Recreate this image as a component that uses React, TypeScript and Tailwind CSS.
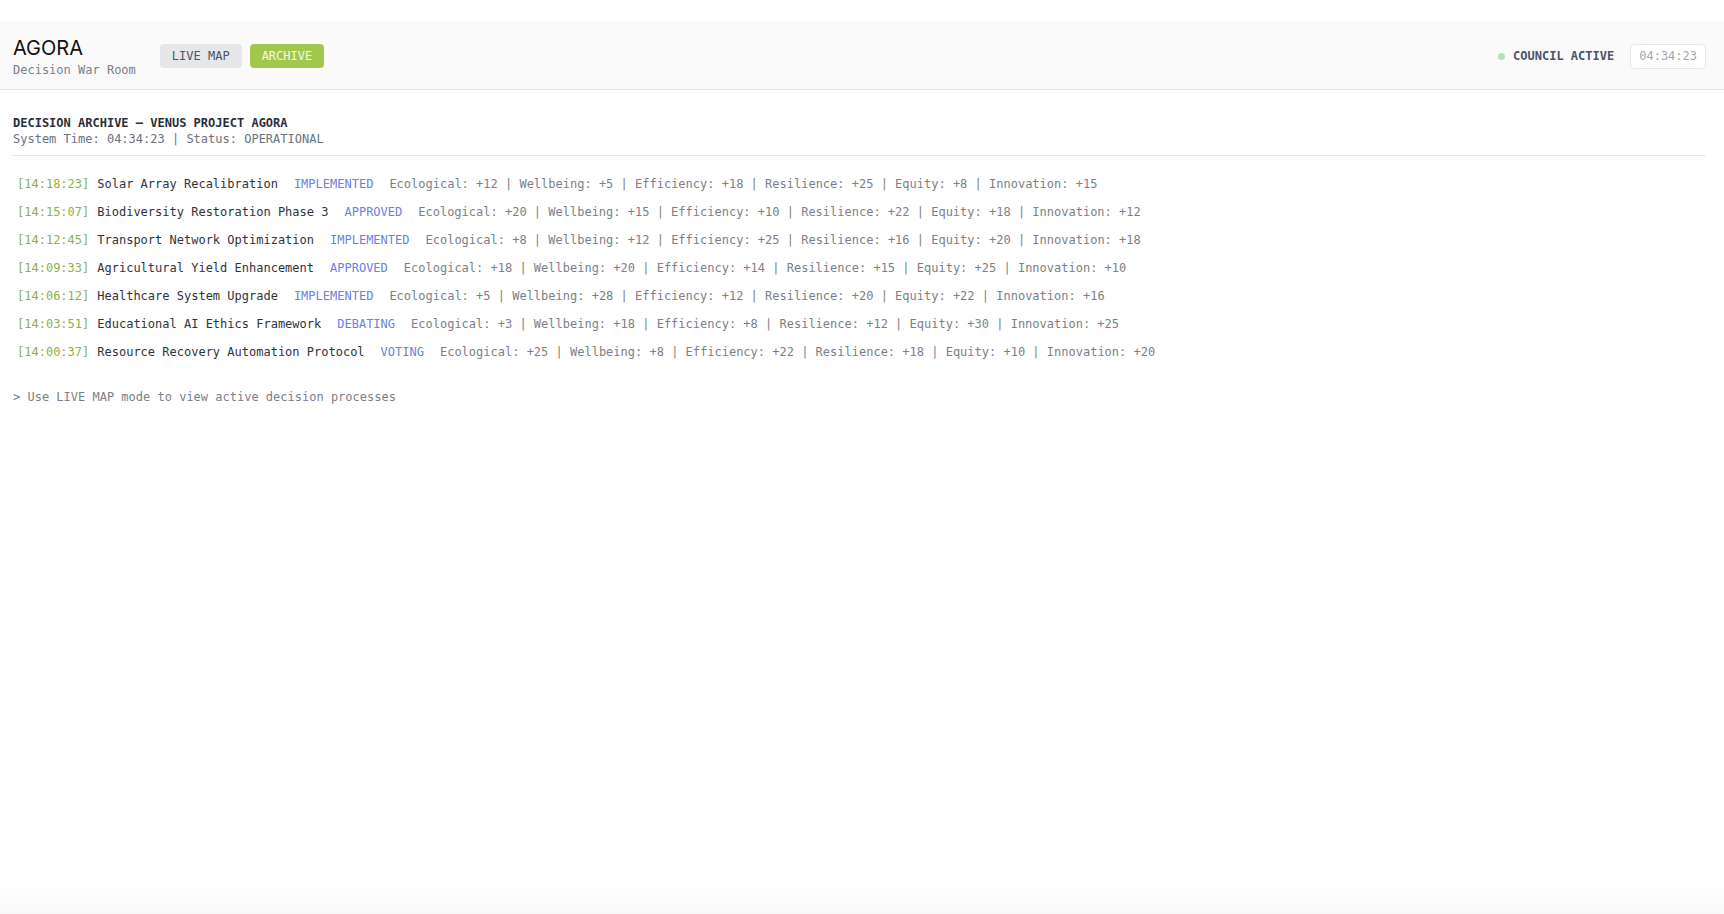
const decisions = [
  {
    time: "14:18:23",
    title: "Solar Array Recalibration",
    status: "IMPLEMENTED",
    metrics: "Ecological: +12 | Wellbeing: +5 | Efficiency: +18 | Resilience: +25 | Equity: +8 | Innovation: +15",
  },
  {
    time: "14:15:07",
    title: "Biodiversity Restoration Phase 3",
    status: "APPROVED",
    metrics: "Ecological: +20 | Wellbeing: +15 | Efficiency: +10 | Resilience: +22 | Equity: +18 | Innovation: +12",
  },
  {
    time: "14:12:45",
    title: "Transport Network Optimization",
    status: "IMPLEMENTED",
    metrics: "Ecological: +8 | Wellbeing: +12 | Efficiency: +25 | Resilience: +16 | Equity: +20 | Innovation: +18",
  },
  {
    time: "14:09:33",
    title: "Agricultural Yield Enhancement",
    status: "APPROVED",
    metrics: "Ecological: +18 | Wellbeing: +20 | Efficiency: +14 | Resilience: +15 | Equity: +25 | Innovation: +10",
  },
  {
    time: "14:06:12",
    title: "Healthcare System Upgrade",
    status: "IMPLEMENTED",
    metrics: "Ecological: +5 | Wellbeing: +28 | Efficiency: +12 | Resilience: +20 | Equity: +22 | Innovation: +16",
  },
  {
    time: "14:03:51",
    title: "Educational AI Ethics Framework",
    status: "DEBATING",
    metrics: "Ecological: +3 | Wellbeing: +18 | Efficiency: +8 | Resilience: +12 | Equity: +30 | Innovation: +25",
  },
  {
    time: "14:00:37",
    title: "Resource Recovery Automation Protocol",
    status: "VOTING",
    metrics: "Ecological: +25 | Wellbeing: +8 | Efficiency: +22 | Resilience: +18 | Equity: +10 | Innovation: +20",
  },
];

function Header() {
  return (
    <header className="flex items-center justify-between bg-[#fafafa] border-b border-[#e5e7eb] pl-[13px] pr-[18px] pt-[13px] pb-[11px]">
      <div className="flex items-center gap-6">
        <div className="flex flex-col">
          <h1 className="font-['Inter',sans-serif] text-xl leading-7 text-[#111]">AGORA</h1>
          <span className="text-xs leading-4 text-[#7c8089]">Decision War Room</span>
        </div>
        <nav className="flex items-center gap-2">
          <button className="h-6 px-3 rounded bg-[#e5e7eb] text-xs text-[#4b5563]">LIVE MAP</button>
          <button className="h-6 px-3 rounded bg-[#a2c84b] text-xs text-[#f3f8e6]">ARCHIVE</button>
        </nav>
      </div>
      <div className="flex items-center">
        <div className="flex items-center gap-2">
          <span className="w-[7px] h-[7px] rounded-full bg-[#b5e2b3]" />
          <span className="text-xs font-semibold text-[#4b5563]">COUNCIL ACTIVE</span>
        </div>
        <div className="ml-4 h-[25px] px-2 flex items-center rounded border border-[#e5e7eb] bg-white text-xs text-[#a3a7ae]">
          04:34:23
        </div>
      </div>
    </header>
  );
}

export default function App() {
  return (
    <div className="min-h-screen flex flex-col bg-white font-['DejaVu_Sans_Mono',monospace]">
      <div className="h-[21px]" />
      <Header />
      <main className="flex-1 pl-[13px] pr-[18px] pt-[25px]">
        <div className="border-b border-[#e5e7eb] pb-2">
          <h2 className="text-xs leading-4 font-bold text-[#2a2f3a]">DECISION ARCHIVE — VENUS PROJECT AGORA</h2>
          <p className="text-xs leading-4 text-[#6b7280]">System Time: 04:34:23 | Status: OPERATIONAL</p>
        </div>
        <div className="mt-[14px] flex flex-col">
          {decisions.map((d) => (
            <div key={d.time} className="flex items-center px-1 py-1.5 text-xs leading-4 whitespace-nowrap">
              <span className="text-[#8db04a]">[{d.time}]</span>
              <span className="ml-2 text-[#2f333b]">{d.title}</span>
              <span className="ml-4 text-[#6c80e4]">{d.status}</span>
              <span className="ml-4 text-[#7b7f87]">{d.metrics}</span>
            </div>
          ))}
        </div>
        <p className="mt-[23px] text-xs leading-4 text-[#7b7f87]">&gt; Use LIVE MAP mode to view active decision processes</p>
      </main>
      <div className="h-[34px] bg-gradient-to-b from-white to-[#f9f9f9]" />
    </div>
  );
}
